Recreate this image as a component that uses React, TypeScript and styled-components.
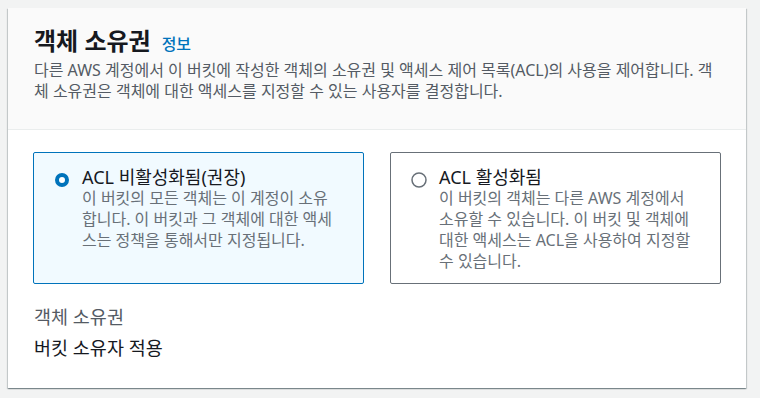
import React from "react";
import styled, { createGlobalStyle } from "styled-components";

const GlobalStyle = createGlobalStyle`
  html, body {
    margin: 0;
    padding: 0;
    background: #f2f3f3;
  }
  body {
    font-family: "Noto Sans", "Noto Sans CJK KR", sans-serif;
    color: #16191f;
  }
`;

const Page = styled.div`
  padding: 8px 14px 9px 8px;
`;

const Card = styled.section`
  width: 738px;
  background: #ffffff;
  box-shadow: 0 1px 1px 0 rgba(0, 28, 36, 0.3),
    1px 1px 1px 0 rgba(0, 28, 36, 0.15),
    -1px 1px 1px 0 rgba(0, 28, 36, 0.15);
`;

const Header = styled.header`
  background: #fafafa;
  border-bottom: 1px solid #eaeded;
  padding: 18px 25px 27px 26px;
`;

const TitleRow = styled.div`
  display: flex;
  align-items: baseline;
  gap: 11px;
`;

const Title = styled.h2`
  margin: 0;
  font-size: 24px;
  line-height: 30px;
  font-weight: 700;
  color: #16191f;
`;

const InfoLink = styled.a`
  font-size: 16px;
  font-weight: 500;
  color: #0073bb;
  text-decoration: none;
`;

const Description = styled.p`
  margin: 4px 0 0;
  font-size: 16px;
  line-height: 21px;
  color: #545b64;
`;

const Body = styled.div`
  padding: 22px 25px 28px 25px;
`;

const TileGrid = styled.div`
  display: grid;
  grid-template-columns: 1fr 1fr;
  gap: 26px;
`;

const Tile = styled.label<{ $selected?: boolean }>`
  display: flex;
  align-items: flex-start;
  gap: 12px;
  padding: 13px 24px 11px 20px;
  border: 1px solid ${(p) => (p.$selected ? "#0073bb" : "#687078")};
  border-radius: 2px;
  background: ${(p) => (p.$selected ? "#f1faff" : "#ffffff")};
  cursor: pointer;
`;

const RadioBox = styled.span`
  flex: none;
  width: 16px;
  height: 16px;
  margin-top: 6px;
  display: flex;
`;

const TileText = styled.div`
  display: flex;
  flex-direction: column;
`;

const TileLabel = styled.span`
  font-size: 18px;
  line-height: 22px;
  color: #16191f;
`;

const TileDesc = styled.span`
  font-size: 16px;
  line-height: 21px;
  color: #687078;
`;

const KeyValue = styled.div`
  margin-top: 20px;
  margin-left: 1px;
  display: flex;
  flex-direction: column;
  gap: 6px;
`;

const KeyLabel = styled.div`
  font-size: 18.5px;
  line-height: 25px;
  color: #545b64;
`;

const KeyVal = styled.div`
  font-size: 18.5px;
  line-height: 25px;
  color: #16191f;
`;

const Radio = ({ checked }: { checked: boolean }) => (
  <RadioBox>
    <svg width="16" height="16" viewBox="0 0 16 16">
      {checked ? (
        <circle cx="8" cy="8" r="5" fill="#ffffff" stroke="#0073bb" strokeWidth="4" />
      ) : (
        <circle cx="8" cy="8" r="7" fill="#ffffff" stroke="#687078" strokeWidth="1.5" />
      )}
    </svg>
  </RadioBox>
);

export default function App() {
  return (
    <>
      <GlobalStyle />
      <Page>
        <Card>
          <Header>
            <TitleRow>
              <Title>객체 소유권</Title>
              <InfoLink href="#">정보</InfoLink>
            </TitleRow>
            <Description>
              다른 AWS 계정에서 이 버킷에 작성한 객체의 소유권 및 액세스 제어 목록(ACL)의 사용을 제어합니다. 객체 소유권은 객체에 대한 액세스를 지정할 수 있는 사용자를 결정합니다.
            </Description>
          </Header>
          <Body>
            <TileGrid>
              <Tile $selected>
                <Radio checked />
                <TileText>
                  <TileLabel>ACL 비활성화됨(권장)</TileLabel>
                  <TileDesc>
                    이 버킷의 모든 객체는 이 계정이 소유합니다. 이 버킷과 그 객체에 대한 액세스는 정책을 통해서만 지정됩니다.
                  </TileDesc>
                </TileText>
              </Tile>
              <Tile>
                <Radio checked={false} />
                <TileText>
                  <TileLabel>ACL 활성화됨</TileLabel>
                  <TileDesc>
                    이 버킷의 객체는 다른 AWS 계정에서 소유할 수 있습니다. 이 버킷 및 객체에 대한 액세스는 ACL을 사용하여 지정할 수 있습니다.
                  </TileDesc>
                </TileText>
              </Tile>
            </TileGrid>
            <KeyValue>
              <KeyLabel>객체 소유권</KeyLabel>
              <KeyVal>버킷 소유자 적용</KeyVal>
            </KeyValue>
          </Body>
        </Card>
      </Page>
    </>
  );
}
